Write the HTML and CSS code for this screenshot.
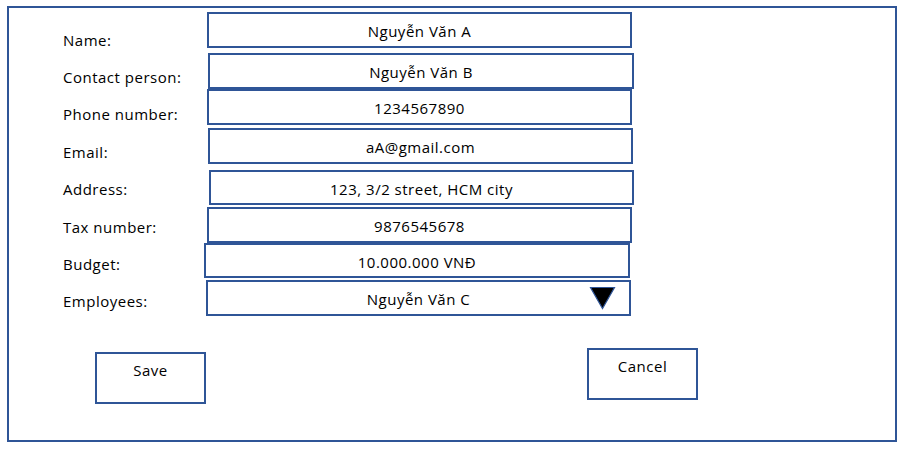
FILE: index.html
```html
<!DOCTYPE html>
<html lang="vi">
<head>
<meta charset="utf-8">
<title>Customer form</title>
<link rel="stylesheet" href="styles.css">
</head>
<body>
<div class="frame">
  <div class="form">
    <div class="labels">
      <div class="label">Name:</div>
      <div class="label">Contact person:</div>
      <div class="label">Phone number:</div>
      <div class="label">Email:</div>
      <div class="label">Address:</div>
      <div class="label">Tax number:</div>
      <div class="label">Budget:</div>
      <div class="label">Employees:</div>
    </div>
    <div class="fields">
      <div class="field f1">Nguyễn Văn A</div>
      <div class="field f2">Nguyễn Văn B</div>
      <div class="field f3">1234567890</div>
      <div class="field f4">aA@gmail.com</div>
      <div class="field f5">123, 3/2 street, HCM city</div>
      <div class="field f6">9876545678</div>
      <div class="field f7">10.000.000 VNĐ</div>
      <div class="field f8 select">Nguyễn Văn C
        <svg class="caret" width="27" height="24" viewBox="0 0 27 24"><polygon points="1.5,1.5 25.5,1.5 13.5,22.5" fill="#000" stroke="#2f5597" stroke-width="1.2" stroke-linejoin="miter"/></svg>
      </div>
    </div>
  </div>
  <div class="buttons">
    <div class="btn save">Save</div>
    <div class="btn cancel">Cancel</div>
  </div>
</div>
</body>
</html>
```
FILE: styles.css
```css
* { box-sizing: border-box; }
html, body { margin: 0; padding: 0; background: #fff; }
body {
  font-family: "Open Sans", "Liberation Sans", sans-serif;
  font-size: 15px;
  letter-spacing: 0.5px;
  color: #000;
}
.frame {
  margin: 6px 0 0 7px;
  width: 890px;
  height: 436px;
  border: 2px solid #2f5597;
  display: flex;
  flex-direction: column;
}
.form {
  display: flex;
  align-items: flex-start;
}
.labels {
  width: 195px;
  padding: 13.5px 0 0 54px;
  display: flex;
  flex-direction: column;
}
.label {
  line-height: 37.4px;
  white-space: nowrap;
}
.fields {
  display: flex;
  flex-direction: column;
}
.field {
  position: relative;
  width: 425px;
  height: 36px;
  border: 2px solid #2f5597;
  padding-top: 1px;
  line-height: 32px;
  text-align: center;
  white-space: nowrap;
}
.f1 { margin: 4px 0 0 3px; }
.f2 { margin: 5px 0 0 4px; width: 426px; }
.f3 { margin: 0 0 0 3px; }
.f4 { margin: 3px 0 0 4px; }
.f5 { margin: 6px 0 0 5px; height: 35px; }
.f6 { margin: 2px 0 0 3px; }
.f7 { margin: 0 0 0 0; width: 426px; height: 35px; }
.f8 { margin: 2px 0 0 2px; }
.caret {
  position: absolute;
  left: 381px;
  top: 4px;
}
.buttons {
  display: flex;
  align-items: flex-start;
  padding-left: 86px;
  margin-top: 27.3px;
  gap: 381px;
}
.btn {
  width: 111px;
  height: 52px;
  border: 2px solid #2f5597;
  padding-top: 5.5px;
  text-align: center;
  line-height: 20px;
}
.save { margin-top: 4px; }
```
